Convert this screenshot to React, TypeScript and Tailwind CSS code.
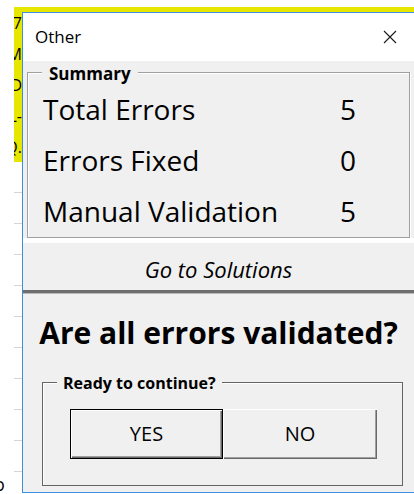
import React from 'react';

// ── Spreadsheet edge peeking out behind the dialog ─────────────────────────

const YELLOW_CELLS = ['7', 'M', 'D', 'L-', 'Q.'];
const WHITE_ROWS = 10;

function SheetEdge() {
  return (
    <div className="w-[8px] flex flex-col overflow-hidden">
      <div className="bg-[#e6e600]">
        {YELLOW_CELLS.map((c, i) => (
          <div key={i} className="h-[31px] flex items-center justify-end overflow-hidden">
            <span className="text-[16px] leading-none text-black whitespace-nowrap">{c}</span>
          </div>
        ))}
      </div>
      {Array.from({ length: WHITE_ROWS }, (_, i) => (
        <div key={i} className="h-[31px] border-b border-[#d6d6d6]" />
      ))}
    </div>
  );
}

// ── Summary rows ────────────────────────────────────────────────────────────

const SUMMARY = [
  { label: 'Total Errors', value: 5 },
  { label: 'Errors Fixed', value: 0 },
  { label: 'Manual Validation', value: 5 },
];

function CloseIcon() {
  return (
    <svg width="14" height="14" viewBox="0 0 14 14" className="block">
      <path d="M1 1 L13 13 M13 1 L1 13" stroke="#1a1a1a" strokeWidth="1.1" fill="none" />
    </svg>
  );
}

export default function App() {
  return (
    <div className="w-[414px] h-[494px] bg-white flex flex-col overflow-hidden font-['Open_Sans',sans-serif] text-black">
      <div className="h-[7px] shrink-0" />
      <div className="flex flex-1">
        {/* left gutter with clipped cell text */}
        <div className="w-[14px] flex flex-col justify-end overflow-hidden">
          <span className="-ml-[6px] mb-[1px] text-[18px] leading-[18px]">o</span>
        </div>

        <SheetEdge />

        <div className="flex-1 flex flex-col">
          <div className="h-[5px] bg-[#e6e600]" />

          {/* Dialog window */}
          <div className="h-[481px] flex flex-col border-t border-l border-b border-[#3b8fde] bg-white">
            {/* Title bar */}
            <div className="h-[48px] flex items-center justify-between pl-[12px] pr-[17px] bg-white">
              <span className="text-[17px]">Other</span>
              <CloseIcon />
            </div>

            {/* Body */}
            <div className="flex-1 bg-[#f0f0f0] flex flex-col">
              {/* Summary group */}
              <div className="mx-[4px] mt-[11px] border border-[#a0a0a0] shadow-[inset_1px_1px_0_#fff,1px_1px_0_#fff]">
                <div className="-mt-[9px] ml-[14px] w-fit px-[7px] bg-[#f0f0f0] text-[17px] leading-[20px] font-bold">
                  Summary
                </div>
                {SUMMARY.map((row) => (
                  <div key={row.label} className="flex h-[51px] items-center pl-[15px] text-[28px] leading-[51px]">
                    <span className="w-[297px]">{row.label}</span>
                    <span>{row.value}</span>
                  </div>
                ))}
              </div>

              {/* Go to Solutions */}
              <button className="h-[55px] border-t-[5px] border-t-white border-b-[3px] border-b-[#6e6e6e] shadow-[0_1px_0_#b8b8b8] bg-[#f0f0f0] flex items-center justify-center pt-[6px] text-[22px] italic">
                Go to Solutions
              </button>

              <div className="mt-[20px] text-center text-[30px] leading-[40px] font-bold">
                Are all errors validated?
              </div>

              {/* Ready group */}
              <div className="mt-[29px] ml-[19px] w-[361px] border border-[#646464] shadow-[inset_1px_1px_0_#fff]">
                <div className="-mt-[10px] ml-[14px] w-fit px-[6px] bg-[#f0f0f0] text-[16px] leading-[20px] font-bold">
                  Ready to continue?
                </div>
                <div className="mt-[16px] mb-[26px] ml-[27px] flex">
                  <button className="w-[153px] h-[50px] border border-black bg-[#f0f0f0] shadow-[inset_1px_1px_0_#fff,inset_-1px_-1px_0_#696969,inset_-2px_-2px_0_#a0a0a0] text-[20px]">
                    YES
                  </button>
                  <button className="w-[154px] h-[50px] bg-[#f0f0f0] shadow-[inset_1px_1px_0_#fff,inset_-1px_-1px_0_#696969,inset_-2px_-2px_0_#a0a0a0] text-[20px]">
                    NO
                  </button>
                </div>
              </div>
            </div>
          </div>
        </div>
      </div>
    </div>
  );
}
